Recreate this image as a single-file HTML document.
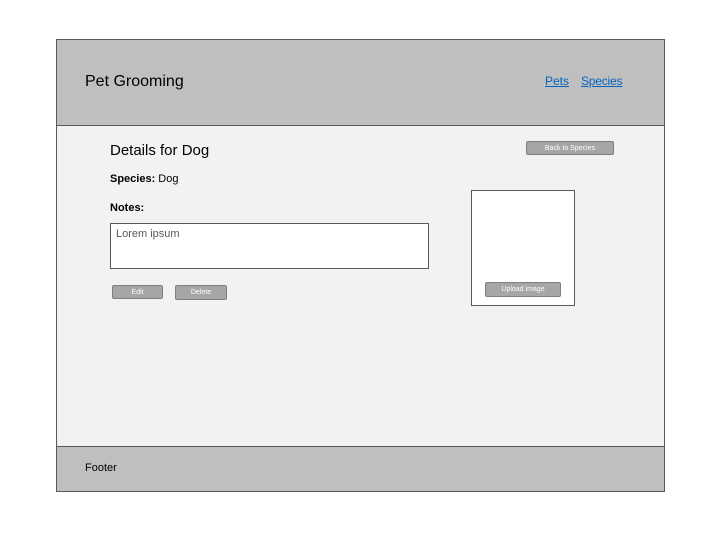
<!DOCTYPE html>
<html><head><style>
body{margin:0;width:720px;height:540px;background:#fff;font-family:"Liberation Sans",sans-serif;position:relative;overflow:hidden}
.a{position:absolute}
.btn{position:absolute;background:#a6a6a6;border:1px solid #7f7f7f;border-radius:2px;color:#fff;font-size:7px;text-align:center;box-sizing:border-box}
</style></head><body>
<div class="a" style="left:56px;top:39px;width:609px;height:453px;border:1px solid #595959;box-sizing:border-box;background:#f2f2f2"></div>
<div class="a" style="left:56px;top:39px;width:609px;height:87px;border:1px solid #595959;box-sizing:border-box;background:#bfbfbf"></div>
<div class="a" style="left:56px;top:446px;width:609px;height:46px;border:1px solid #595959;box-sizing:border-box;background:#bfbfbf"></div>
<div class="a" style="left:85px;top:73px;font-size:16px;color:#000">Pet Grooming</div>
<div class="a" style="left:545px;top:74px;font-size:12px;color:#0563c1;text-decoration:underline">Pets</div>
<div class="a" style="left:581px;top:74px;font-size:12px;color:#0563c1;text-decoration:underline;letter-spacing:-0.2px">Species</div>
<div class="a" style="left:85px;top:462px;font-size:11px">Footer</div>
<div class="a" style="left:110px;top:142px;font-size:15px">Details for Dog</div>
<div class="a" style="left:110px;top:173px;font-size:11px"><b>Species:</b> Dog</div>
<div class="a" style="left:110px;top:202px;font-size:11px"><b>Notes:</b></div>
<div class="a" style="left:110px;top:223px;width:319px;height:46px;border:1px solid #595959;box-sizing:border-box;background:#fff;font-size:11px;color:#595959;padding:4px 5px">Lorem ipsum</div>
<div class="btn" style="left:112px;top:285px;width:51px;height:14px;line-height:13px">Edit</div>
<div class="btn" style="left:175px;top:285px;width:52px;height:15px;line-height:14px">Delete</div>
<div class="btn" style="left:526px;top:141px;width:88px;height:14px;line-height:13px">Back to Species</div>
<div class="a" style="left:471px;top:190px;width:104px;height:116px;border:1px solid #595959;box-sizing:border-box;background:#fff"></div>
<div class="btn" style="left:485px;top:282px;width:76px;height:15px;line-height:13px">Upload image</div>
</body></html>
